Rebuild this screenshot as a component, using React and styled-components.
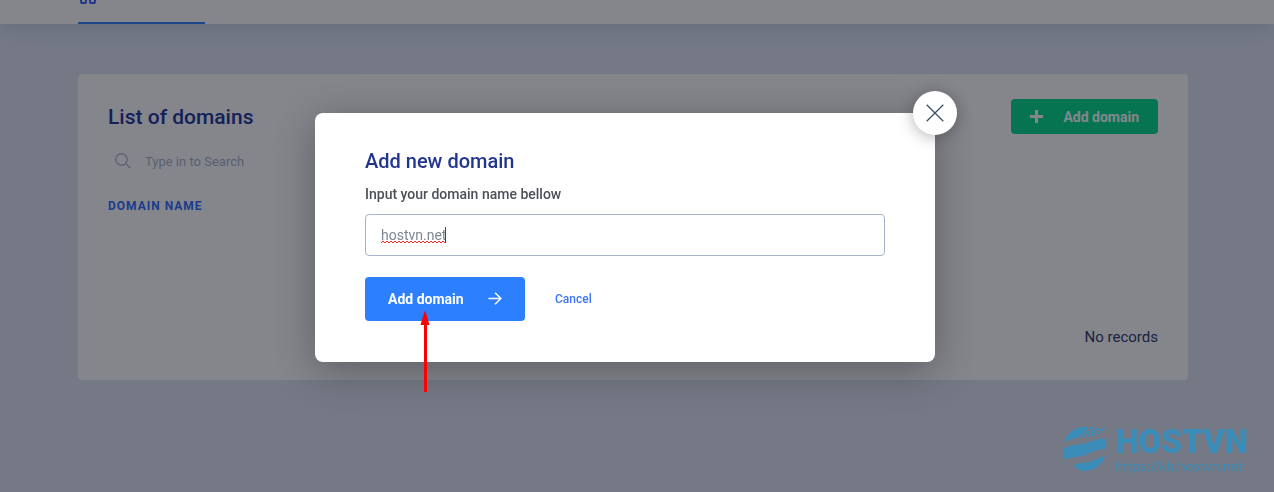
import React, { useState } from "react";
import styled, { createGlobalStyle } from "styled-components";

const SearchIcon = () => (
  <svg width="16" height="16" viewBox="0 0 16 16" fill="none" stroke="#b2b9d0">
    <circle cx="6.5" cy="6.5" r="5.7" strokeWidth="1.4" />
    <path d="M10.8 10.8L15.5 15.3" strokeWidth="1.4" />
  </svg>
);

const PlusIcon = () => (
  <svg width="13" height="13" viewBox="0 0 13 13" stroke="#fff" strokeWidth="3">
    <path d="M6.5 0V13M0 6.5H13" />
  </svg>
);

const ArrowIcon = () => (
  <svg width="14" height="14" viewBox="0 0 14 14" fill="none" stroke="#fff">
    <path d="M0.5 6.5H12.8M7 0.7L12.9 6.5L7 12.3" strokeWidth="1.4" />
  </svg>
);

const CloseIcon = () => (
  <svg width="18" height="18" viewBox="0 0 18 18" stroke="#3c5068">
    <path d="M0.7 0.7L17.3 17.3M17.3 0.7L0.7 17.3" strokeWidth="1.3" />
  </svg>
);

const GridIcon = () => (
  <svg width="20" height="18" viewBox="0 0 20 18" fill="none" stroke="#3d5ef5">
    <g strokeWidth="2">
      <rect x="3" y="1" width="5" height="6" rx="1" />
      <rect x="12" y="1" width="5" height="6" rx="1" />
      <rect x="3" y="11" width="5" height="6" rx="1" />
      <rect x="12" y="11" width="5" height="6" rx="1" />
    </g>
  </svg>
);

const GlobeLogo = () => (
  <svg width="46" height="46" viewBox="0 0 46 46" fill="#3a8cb9">
    <path d="M2 17C5 8 11 2 20 1L19 5L23 4L22 8L18 9L17 12C12 12 6 13 2 17Z" />
    <path d="M20 1H26V4H20ZM27 1H31V3H27ZM24 5H28V8H24ZM29 4H33V7H29ZM34 2H37V4H34ZM20 9H24V11H20ZM25 9H28V11H25ZM35 6H38V8H35ZM30 8H33V10H30ZM38 3H41V5H38ZM41 1H43V2H41Z" />
    <path d="M2 23C6 19 13 19 20 18C29 17 33 12 43 13C45 17 45 20 43 23C34 22 28 28 19 30C12 32 6 31 3 34C1 30 1 26 2 23Z" />
    <path d="M12 39C17 36 24 38 30 35C35 33 38 31 43 30C40 39 33 44 24 45C19 45 14 43 12 39Z" />
  </svg>
);

export default function App() {
  const [domain, setDomain] = useState("hostvn.net");

  return (
    <Page>
      <GlobalStyle />
      <Header>
        <Container>
          <Tab href="#domains" aria-label="Domains">
            <GridIcon />
          </Tab>
        </Container>
      </Header>

      <Container as="main">
        <Card>
          <CardHeader>
            <CardTitle>List of domains</CardTitle>
            <AddButton type="button">
              <PlusIcon />
              Add domain
            </AddButton>
          </CardHeader>
          <SearchLabel>
            <SearchIcon />
            <SearchInput
              type="search"
              placeholder="Type in to Search"
              aria-label="Search domains"
            />
          </SearchLabel>
          <Table>
            <thead>
              <tr>
                <th scope="col">Domain name</th>
              </tr>
            </thead>
            <tbody>
              <tr>
                <td>No records</td>
              </tr>
            </tbody>
          </Table>
        </Card>
      </Container>

      <Overlay>
        <Modal role="dialog" aria-labelledby="modal-title">
          <CloseButton type="button" aria-label="Close">
            <CloseIcon />
          </CloseButton>
          <ModalTitle id="modal-title">Add new domain</ModalTitle>
          <form onSubmit={e => e.preventDefault()}>
            <FieldLabel htmlFor="domain">Input your domain name bellow</FieldLabel>
            <FieldWrapper>
              <DomainInput
                type="text"
                id="domain"
                value={domain}
                spellCheck={false}
                onChange={e => setDomain(e.target.value)}
              />
              <Squiggle width="64" height="4" fill="none" stroke="#f22">
                <path d={"M0 3" + "l2 -2l2 2".repeat(16)} />
              </Squiggle>
              <Caret />
            </FieldWrapper>
            <Actions>
              <SubmitButton type="submit">
                Add domain
                <ArrowIcon />
              </SubmitButton>
              <CancelButton type="button">Cancel</CancelButton>
            </Actions>
          </form>
          <Pointer width="10" height="82" viewBox="0 0 10 82" fill="#f00">
            <path d="M5 0L9.5 15H7V82H4V15H0.5Z" />
          </Pointer>
        </Modal>
      </Overlay>

      <Watermark>
        <GlobeLogo />
        <div>
          <Brand>HOSTVN</Brand>
          <BrandUrl>https://kb.hostvn.net</BrandUrl>
        </div>
      </Watermark>
    </Page>
  );
}

const GlobalStyle = createGlobalStyle`
  * {
    box-sizing: border-box;
  }

  body {
    margin: 0;
    background: #dfe5f1;
    font-family: Roboto, sans-serif;
  }

  button, input {
    font-family: inherit;
  }

  svg {
    display: block;
    flex-shrink: 0;
  }
`;

const Page = styled.div`
  min-height: 100vh;
`;

const Header = styled.header`
  display: flex;
  align-items: flex-end;
  height: 24px;
  margin-bottom: 50px;
  background: #fff;
  box-shadow: 0 4px 20px rgba(40, 60, 100, 0.15);
  clip-path: inset(0 0 -30px 0);
`;

const Container = styled.div`
  width: 100%;
  max-width: 1266px;
  padding: 0 78px;
`;

const Tab = styled.a`
  display: block;
  width: 127px;
  padding-bottom: 18px;
  border-bottom: 2px solid #2c7fff;
`;

const Card = styled.section`
  padding: 25px 30px 30px;
  border-radius: 4px;
  background: #fff;
`;

const CardHeader = styled.div`
  display: flex;
  justify-content: space-between;
  align-items: center;
`;

const CardTitle = styled.h1`
  margin: 0;
  color: #213399;
  font-size: 21px;
  font-weight: 500;
  line-height: 24px;
`;

const AddButton = styled.button`
  display: flex;
  align-items: center;
  gap: 20px;
  height: 35px;
  padding: 0 19px;
  border: 0;
  border-radius: 4px;
  background: #03db87;
  color: #fff;
  font-size: 14px;
  font-weight: 700;
`;

const SearchLabel = styled.label`
  display: flex;
  align-items: center;
  gap: 14px;
  height: 34px;
  margin-top: 10px;
  padding-left: 7px;
`;

const SearchInput = styled.input`
  width: 160px;
  padding: 0;
  border: 0;
  outline: 0;
  background: none;
  font-size: 13px;

  &::placeholder {
    color: #a9b0c8;
  }
`;

const Table = styled.table`
  width: 100%;
  margin-top: 16px;
  border-collapse: collapse;

  th {
    padding: 0;
    color: #2c6bff;
    font-size: 12px;
    font-weight: 700;
    letter-spacing: 1px;
    line-height: 24px;
    text-align: left;
    text-transform: uppercase;
  }

  td {
    height: 132px;
    padding: 0 0 1px;
    color: #2b3566;
    font-size: 15px;
    line-height: 24px;
    text-align: right;
    vertical-align: bottom;
  }
`;

const Overlay = styled.div`
  position: fixed;
  inset: 0;
  padding: 113px 24px 0 0;
  background: rgba(9, 13, 25, 0.5);
`;

const Modal = styled.div`
  position: relative;
  max-width: 620px;
  margin: 0 auto;
  padding: 36px 50px 41px;
  border-radius: 8px;
  background: #fff;
  box-shadow: 0 8px 40px rgba(0, 0, 0, 0.3);
`;

const CloseButton = styled.button`
  position: absolute;
  top: -22px;
  right: -22px;
  display: flex;
  justify-content: center;
  align-items: center;
  width: 44px;
  height: 44px;
  padding: 0;
  border: 0;
  border-radius: 50%;
  background: #fff;
  box-shadow: 0 2px 16px rgba(0, 0, 0, 0.3);
`;

const ModalTitle = styled.h2`
  margin: 0 0 10px;
  color: #223690;
  font-size: 20px;
  font-weight: 500;
  line-height: 24px;
`;

const FieldLabel = styled.label`
  display: block;
  margin-bottom: 8px;
  color: #4b5058;
  font-size: 14px;
  font-weight: 500;
  line-height: 23px;
`;

const FieldWrapper = styled.div`
  position: relative;
`;

const DomainInput = styled.input`
  display: block;
  width: 100%;
  height: 42px;
  padding: 0 15px;
  border: 1px solid #a5b4c8;
  border-radius: 4px;
  outline: 0;
  color: #7e8792;
  font-size: 14px;
`;

const Squiggle = styled.svg`
  position: absolute;
  top: 26px;
  left: 16px;
`;

const Caret = styled.span`
  position: absolute;
  top: 13px;
  left: 80px;
  width: 1px;
  height: 16px;
  background: #444;
`;

const Actions = styled.div`
  display: flex;
  align-items: center;
  gap: 30px;
  margin-top: 21px;
`;

const SubmitButton = styled.button`
  display: flex;
  justify-content: space-between;
  align-items: center;
  width: 160px;
  height: 44px;
  padding: 0 23px;
  border: 0;
  border-radius: 4px;
  background: #2c80ff;
  color: #fff;
  font-size: 14px;
  font-weight: 700;
`;

const CancelButton = styled.button`
  padding: 0;
  border: 0;
  background: none;
  color: #3b78f5;
  font-size: 12px;
  font-weight: 500;
`;

const Pointer = styled.svg`
  position: absolute;
  top: 197px;
  left: 105px;
`;

const Watermark = styled.div`
  position: fixed;
  right: 26px;
  bottom: 18px;
  display: flex;
  align-items: flex-start;
  gap: 7px;
  color: #3a8cb9;
`;

const Brand = styled.div`
  font-size: 33px;
  font-weight: 900;
  line-height: 32px;
`;

const BrandUrl = styled.div`
  font-family: Lato, sans-serif;
  font-size: 14px;
  line-height: 16px;
`;
